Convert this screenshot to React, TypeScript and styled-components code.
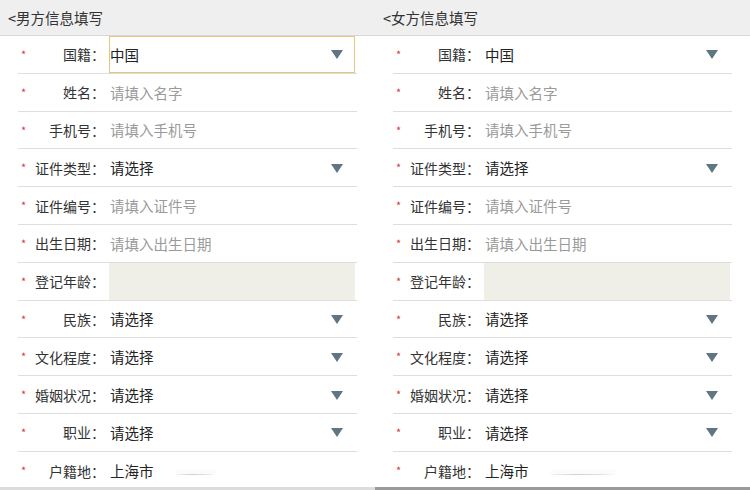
import React, { FC } from 'react';
import styled, { createGlobalStyle } from 'styled-components';

const GlobalStyle = createGlobalStyle`
    html, body {
        margin: 0;
        padding: 0;
        background: #ffffff;
    }
    body {
        font-family: "Noto Sans CJK SC", "Noto Sans", sans-serif;
        font-size: 14.5px;
        color: #333;
    }
`;

type FieldKind = 'select' | 'input' | 'readonly' | 'text';

interface Field {
    label: string;
    kind: FieldKind;
    value?: string;
    placeholder?: string;
}

const fields: Field[] = [
    { label: '国籍', kind: 'select', value: '中国' },
    { label: '姓名', kind: 'input', placeholder: '请填入名字' },
    { label: '手机号', kind: 'input', placeholder: '请填入手机号' },
    { label: '证件类型', kind: 'select', value: '请选择' },
    { label: '证件编号', kind: 'input', placeholder: '请填入证件号' },
    { label: '出生日期', kind: 'input', placeholder: '请填入出生日期' },
    { label: '登记年龄', kind: 'readonly' },
    { label: '民族', kind: 'select', value: '请选择' },
    { label: '文化程度', kind: 'select', value: '请选择' },
    { label: '婚姻状况', kind: 'select', value: '请选择' },
    { label: '职业', kind: 'select', value: '请选择' },
    { label: '户籍地', kind: 'text', value: '上海市' },
];

const Page = styled.div`
    display: flex;
    width: 750px;
    height: 490px;
    overflow: hidden;
`;

const Panel = styled.div`
    width: 375px;
    height: 490px;
    display: flex;
    flex-direction: column;
    background: #fff;
`;

const Header = styled.div`
    height: 35px;
    flex-shrink: 0;
    display: flex;
    align-items: center;
    padding-left: 8px;
    background: #efeff0;
    border-bottom: 1px solid #d8d8d8;
    color: #333;
`;

const Form = styled.div`
    flex: 1;
    min-height: 0;
    overflow: hidden;
    display: flex;
    flex-direction: column;
    padding-left: 18px;
    width: 339px;
`;

const Row = styled.div<{ $last?: boolean }>`
    height: 37.8px;
    flex-shrink: 0;
    box-sizing: border-box;
    display: flex;
    align-items: stretch;
    border-bottom: ${(p) => (p.$last ? 'none' : '1px solid #dedede')};
`;

const Star = styled.span`
    width: 12px;
    padding-left: 3px;
    color: #d8353a;
    font-size: 11px;
    line-height: 1;
    padding-top: 13px;
`;

const Label = styled.div`
    width: 72px;
    display: flex;
    align-items: center;
    justify-content: flex-end;
    font-size: 14px;
    color: #333;
    white-space: nowrap;
`;

const Control = styled.div<{ $focused?: boolean; $disabled?: boolean }>`
    flex: 1;
    display: flex;
    align-items: center;
    justify-content: space-between;
    margin: 0 2px 0 4px;
    padding: 0 11px 0 0;
    box-sizing: border-box;
    border: 1px solid ${(p) => (p.$focused ? '#e3c67a' : 'transparent')};
    background: ${(p) => (p.$disabled ? '#efefe8' : 'transparent')};
`;

const Value = styled.span<{ $muted?: boolean }>`
    color: ${(p) => (p.$muted ? '#9a9a9a' : '#222')};
    white-space: nowrap;
`;

const Arrow = styled.span`
    width: 0;
    height: 0;
    border-left: 6px solid transparent;
    border-right: 6px solid transparent;
    border-top: 9px solid #5f7682;
    margin-top: 1px;
`;

const Smudge = styled.span<{ $width: number }>`
    display: inline-block;
    width: ${(p) => p.$width}px;
    height: 1px;
    margin-left: 22px;
    margin-top: 7px;
    background: linear-gradient(90deg, rgba(200,200,200,0.2), #d0d0d0 40%, #e6e6e6 80%, rgba(230,230,230,0));
    box-shadow: 0 -2px 4px rgba(220, 220, 220, 0.6);
`;

const TextWrap = styled.span`
    display: flex;
    align-items: center;
`;

const BottomBar = styled.div<{ $dark?: boolean }>`
    height: 3px;
    flex-shrink: 0;
    background: ${(p) => (p.$dark ? '#9a9a9a' : '#dcdcdc')};
`;

interface PanelProps {
    title: string;
    focusFirst?: boolean;
    smudgeWidth: number;
    darkBar?: boolean;
}

const FormPanel: FC<PanelProps> = ({ title, focusFirst, smudgeWidth, darkBar }) => (
    <Panel>
        <Header>{'<' + title}</Header>
        <Form>
            {fields.map((f, i) => (
                <Row key={f.label} $last={i === fields.length - 1}>
                    <Star>*</Star>
                    <Label>{f.label}：</Label>
                    <Control $focused={focusFirst && i === 0} $disabled={f.kind === 'readonly'}>
                        {f.kind === 'select' && (
                            <>
                                <Value>{f.value}</Value>
                                <Arrow />
                            </>
                        )}
                        {f.kind === 'input' && <Value $muted>{f.placeholder}</Value>}
                        {f.kind === 'text' && (
                            <TextWrap>
                                <Value>{f.value}</Value>
                                <Smudge $width={smudgeWidth} />
                            </TextWrap>
                        )}
                    </Control>
                </Row>
            ))}
        </Form>
        <BottomBar $dark={darkBar} />
    </Panel>
);

export default function App() {
    return (
        <>
            <GlobalStyle />
            <Page>
                <FormPanel title="男方信息填写" focusFirst smudgeWidth={40} />
                <FormPanel title="女方信息填写" smudgeWidth={66} darkBar />
            </Page>
        </>
    );
}
